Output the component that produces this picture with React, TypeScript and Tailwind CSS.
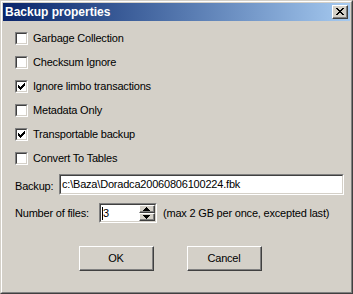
import React from 'react';

const font = { fontFamily: '"Liberation Sans", Arial, sans-serif' };

function CheckBox({ checked }: { checked?: boolean }) {
  return (
    <div className="w-[13px] h-[13px] shrink-0 border-t border-l border-t-[#808080] border-l-[#808080] border-b border-r border-b-white border-r-white">
      <div className="w-full h-full border-t border-l border-t-[#404040] border-l-[#404040] border-b border-r border-b-[#d4d0c8] border-r-[#d4d0c8] bg-white flex items-center justify-center">
        {checked && (
          <svg width="7" height="7" viewBox="0 0 7 7" shapeRendering="crispEdges">
            <path d="M0 2h1v3h-1zM1 3h1v3h-1zM2 4h1v3h-1zM3 3h1v3h-1zM4 2h1v3h-1zM5 1h1v3h-1zM6 0h1v3h-1z" fill="#000" />
          </svg>
        )}
      </div>
    </div>
  );
}

function CheckRow({ label, checked }: { label: string; checked?: boolean }) {
  return (
    <div className="h-[24px] flex items-center gap-[5px]">
      <CheckBox checked={checked} />
      <span className="text-[11px] text-black leading-none tracking-[-0.2px]">{label}</span>
    </div>
  );
}

function Raised({ children, className }: { children: React.ReactNode; className?: string }) {
  return (
    <div className={`border-t border-l border-t-white border-l-white border-b border-r border-b-[#404040] border-r-[#404040] bg-[#d4d0c8] ${className ?? ''}`}>
      <div className="w-full h-full border-b border-r border-b-[#808080] border-r-[#808080] flex items-center justify-center">
        {children}
      </div>
    </div>
  );
}

function SpinArrow({ up }: { up?: boolean }) {
  return (
    <svg width="7" height="4" viewBox="0 0 7 4" shapeRendering="crispEdges">
      {up ? (
        <path d="M3 0h1v1h-1zM2 1h3v1h-3zM1 2h5v1h-5zM0 3h7v1h-7z" fill="#000" />
      ) : (
        <path d="M0 0h7v1h-7zM1 1h5v1h-5zM2 2h3v1h-3zM3 3h1v1h-1z" fill="#000" />
      )}
    </svg>
  );
}

export default function App() {
  return (
    <div className="w-[353px] h-[294px] bg-[#d4d0c8] select-none" style={font}>
      <div className="w-full h-full border-t border-l border-t-[#d4d0c8] border-l-[#d4d0c8] border-b border-r border-b-[#404040] border-r-[#404040]">
        <div className="w-full h-full border-t border-l border-t-white border-l-white border-b border-r border-b-[#808080] border-r-[#808080] p-px flex flex-col">
          {/* Title bar */}
          <div className="h-[18px] shrink-0 flex items-center justify-between pl-[2px] pr-[2px] bg-gradient-to-r from-[#0a246a] to-[#a6caf0]">
            <span className="text-white font-bold text-[12px] leading-none">Backup properties</span>
            <Raised className="w-[16px] h-[14px]">
              <svg width="8" height="7" viewBox="0 0 8 7" shapeRendering="crispEdges">
                <path d="M0 0h2v1h-2zM6 0h2v1h-2zM1 1h2v1h-2zM5 1h2v1h-2zM2 2h4v1h-4zM3 3h2v1h-2zM2 4h4v1h-4zM1 5h2v1h-2zM5 5h2v1h-2zM0 6h2v1h-2zM6 6h2v1h-2z" fill="#000" />
              </svg>
            </Raised>
          </div>

          {/* Content */}
          <div className="flex-1 flex flex-col pl-[12px] pr-[6px] pt-[5px] text-[11px] text-black tracking-[-0.2px]">
            <CheckRow label="Garbage Collection" />
            <CheckRow label="Checksum Ignore" />
            <CheckRow label="Ignore limbo transactions" checked />
            <CheckRow label="Metadata Only" />
            <CheckRow label="Transportable backup" checked />
            <CheckRow label="Convert To Tables" />

            <div className="mt-[4px] flex items-center">
              <span className="pt-[4px] w-[44px] shrink-0">Backup:</span>
              <div className="flex-1 h-[21px] border-t border-l border-t-[#808080] border-l-[#808080] border-b border-r border-b-white border-r-white">
                <div className="w-full h-full border-t border-l border-t-[#404040] border-l-[#404040] border-b border-r border-b-[#d4d0c8] border-r-[#d4d0c8] bg-white flex items-center pl-[1px]">
                  <span className="leading-none">c:\Baza\Doradca20060806100224.fbk</span>
                </div>
              </div>
            </div>

            <div className="mt-[8px] flex items-center">
              <span className="w-[84px] shrink-0">Number of files:</span>
              <div className="w-[58px] h-[20px] border-t border-l border-t-[#808080] border-l-[#808080] border-b border-r border-b-white border-r-white">
                <div className="w-full h-full border-t border-l border-t-[#404040] border-l-[#404040] border-b border-r border-b-[#d4d0c8] border-r-[#d4d0c8] bg-white flex">
                  <div className="flex-1 flex items-center pl-[1px]">
                    <div className="w-px h-[13px] bg-black" />
                    <span className="leading-none">3</span>
                  </div>
                  <div className="w-[16px] flex flex-col">
                    <Raised className="h-[8px] w-full"><SpinArrow up /></Raised>
                    <Raised className="h-[8px] w-full"><SpinArrow /></Raised>
                  </div>
                </div>
              </div>
              <span className="ml-[6px]">(max 2 GB per once, excepted last)</span>
            </div>

            <div className="mt-[23px] flex gap-[33px] pl-[64px]">
              <Raised className="w-[75px] h-[25px]">
                <span>OK</span>
              </Raised>
              <Raised className="w-[75px] h-[25px]">
                <span>Cancel</span>
              </Raised>
            </div>
          </div>
        </div>
      </div>
    </div>
  );
}
